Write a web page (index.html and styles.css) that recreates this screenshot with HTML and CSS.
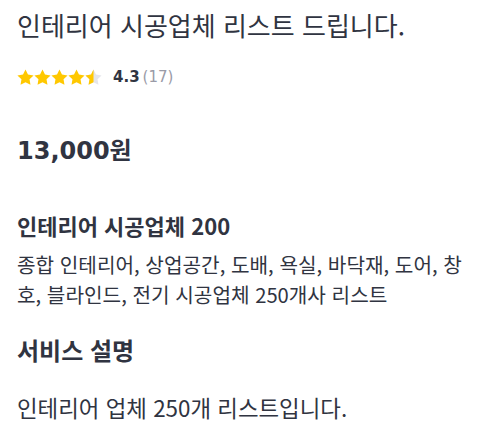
FILE: index.html
```html
<!DOCTYPE html>
<html lang="ko">
<head>
    <meta charset="UTF-8">
    <meta name="viewport" content="width=device-width, initial-scale=1.0">
    <title>인테리어 시공업체 리스트</title>
    <link rel="stylesheet" href="styles.css">
</head>
<body>

    <div class="gig">
        <h1 class="gig-title">인테리어 시공업체 리스트 드립니다.</h1>

        <div class="rating">
            <div class="stars">
                <svg class="star" viewBox="0 0 24 24"><path d="M12 .8l3.5 7.1 7.9 1.1-5.7 5.6 1.3 7.8L12 18.7l-7 3.7 1.3-7.8L.6 9l7.9-1.1z" fill="#ffc800"/></svg>
                <svg class="star" viewBox="0 0 24 24"><path d="M12 .8l3.5 7.1 7.9 1.1-5.7 5.6 1.3 7.8L12 18.7l-7 3.7 1.3-7.8L.6 9l7.9-1.1z" fill="#ffc800"/></svg>
                <svg class="star" viewBox="0 0 24 24"><path d="M12 .8l3.5 7.1 7.9 1.1-5.7 5.6 1.3 7.8L12 18.7l-7 3.7 1.3-7.8L.6 9l7.9-1.1z" fill="#ffc800"/></svg>
                <svg class="star" viewBox="0 0 24 24"><path d="M12 .8l3.5 7.1 7.9 1.1-5.7 5.6 1.3 7.8L12 18.7l-7 3.7 1.3-7.8L.6 9l7.9-1.1z" fill="#ffc800"/></svg>
                <svg class="star" viewBox="0 0 24 24">
                    <path d="M12 .8l3.5 7.1 7.9 1.1-5.7 5.6 1.3 7.8L12 18.7l-7 3.7 1.3-7.8L.6 9l7.9-1.1z" fill="#e4e5ea"/>
                    <path d="M12 .8V18.7l-7 3.7 1.3-7.8L.6 9l7.9-1.1z" fill="#ffc800"/>
                </svg>
            </div>
            <span class="score">4.3</span>
            <span class="count">(17)</span>
        </div>

        <div class="price">13,000원</div>

        <div class="package">
            <h2 class="package-title">인테리어 시공업체 200</h2>
            <p class="package-desc">종합 인테리어, 상업공간, 도배, 욕실, 바닥재, 도어, 창호, 블라인드, 전기 시공업체 250개사 리스트</p>
        </div>

        <div class="section">
            <h2 class="section-title">서비스 설명</h2>
            <p class="section-text">인테리어 업체 250개 리스트입니다.</p>
        </div>
    </div>

</body>
</html>
```

FILE: styles.css
```css
body {
    margin: 0;
    background-color: #fff;
    color: #303441;
    font-family: "Noto Sans CJK KR", "Noto Sans", sans-serif;
}

.gig {
    padding: 8px 10px 0 17px;
}

.gig-title {
    margin: 0;
    font-size: 26px;
    font-weight: 400;
    line-height: 34px;
    color: #303441;
}

.rating {
    display: flex;
    align-items: center;
    margin-top: 25px;
    height: 20px;
    font-family: "DejaVu Sans", "Noto Sans CJK KR", sans-serif;
}

.stars {
    display: flex;
}

.star {
    width: 17px;
    height: 17px;
}

.score {
    margin-left: 11px;
    font-size: 15px;
    font-weight: 700;
}

.count {
    margin-left: 3px;
    font-size: 15px;
    color: #9a9ba7;
}

.price {
    margin-top: 49px;
    font-family: "DejaVu Sans", "Noto Sans CJK KR", sans-serif;
    font-size: 24px;
    font-weight: 700;
    line-height: 30px;
}

.package {
    margin-top: 45px;
}

.package-title {
    margin: 0;
    font-size: 22px;
    font-weight: 700;
    line-height: 28px;
}

.package-desc {
    margin: 11px 0 0 0;
    font-size: 20.2px;
    line-height: 30px;
}

.section {
    margin-top: 24px;
}

.section-title {
    margin: 0;
    font-size: 24px;
    font-weight: 700;
    line-height: 32px;
}

.section-text {
    margin: 26px 0 0 0;
    font-size: 22.4px;
    line-height: 30px;
}
```
